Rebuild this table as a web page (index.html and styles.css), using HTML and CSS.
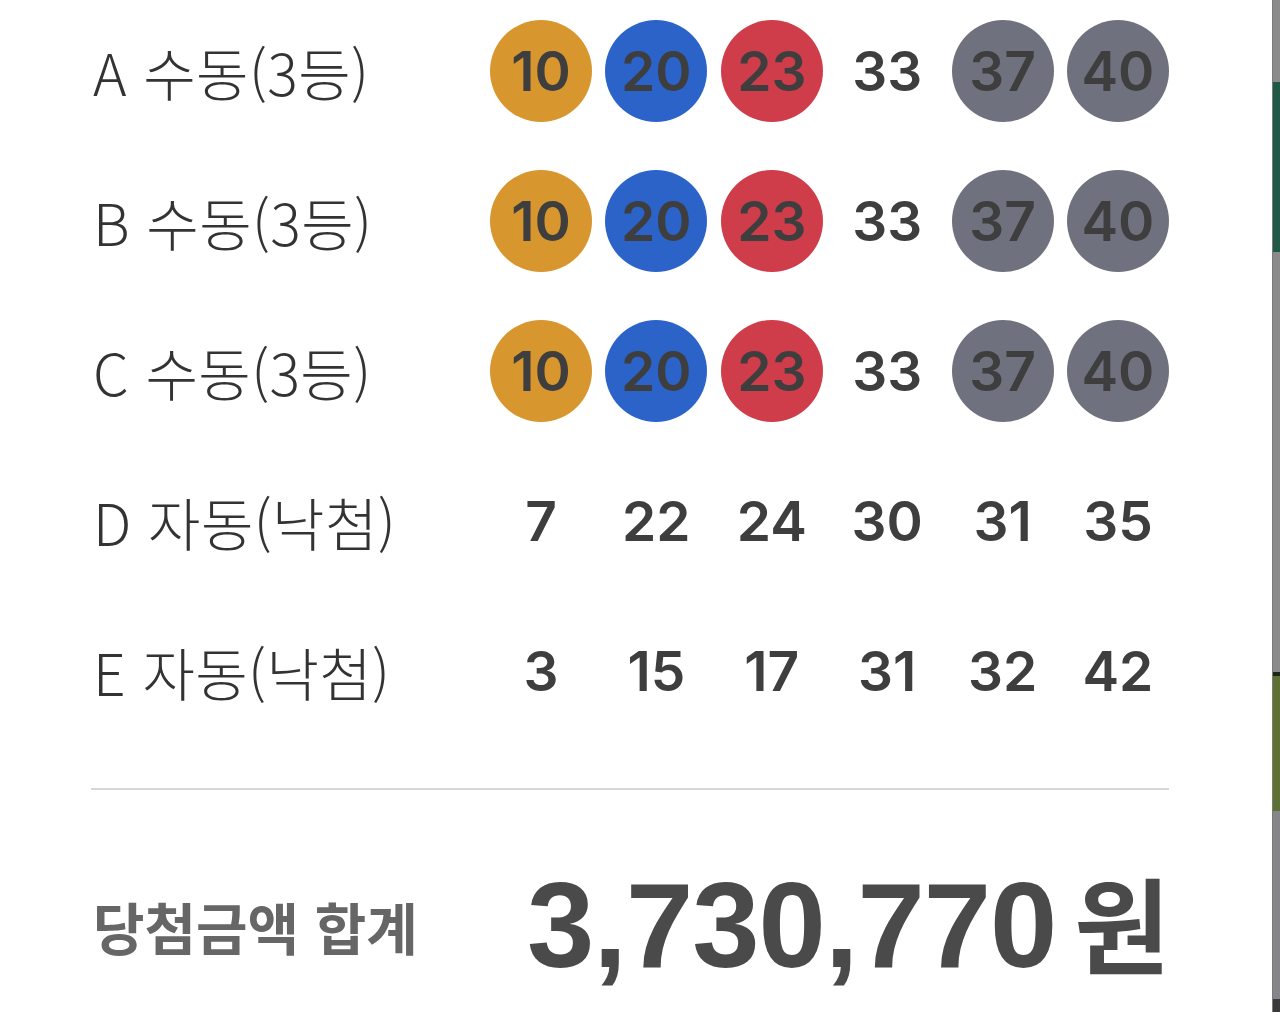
FILE: index.html
```html
<!DOCTYPE html>
<html lang="ko">
<head>
<meta charset="utf-8">
<title>당첨 결과</title>
<link rel="stylesheet" href="styles.css">
</head>
<body>
<div class="screen">
  <main class="sheet">
    <section class="games">
      <div class="game">
        <div class="label">A 수동(3등)</div>
        <span class="ball orange">10</span>
        <span class="ball blue">20</span>
        <span class="ball red">23</span>
        <span class="ball">33</span>
        <span class="ball gray">37</span>
        <span class="ball gray">40</span>
      </div>
      <div class="game">
        <div class="label">B 수동(3등)</div>
        <span class="ball orange">10</span>
        <span class="ball blue">20</span>
        <span class="ball red">23</span>
        <span class="ball">33</span>
        <span class="ball gray">37</span>
        <span class="ball gray">40</span>
      </div>
      <div class="game">
        <div class="label">C 수동(3등)</div>
        <span class="ball orange">10</span>
        <span class="ball blue">20</span>
        <span class="ball red">23</span>
        <span class="ball">33</span>
        <span class="ball gray">37</span>
        <span class="ball gray">40</span>
      </div>
      <div class="game">
        <div class="label">D 자동(낙첨)</div>
        <span class="ball">7</span>
        <span class="ball">22</span>
        <span class="ball">24</span>
        <span class="ball">30</span>
        <span class="ball">31</span>
        <span class="ball">35</span>
      </div>
      <div class="game">
        <div class="label">E 자동(낙첨)</div>
        <span class="ball">3</span>
        <span class="ball">15</span>
        <span class="ball">17</span>
        <span class="ball">31</span>
        <span class="ball">32</span>
        <span class="ball">42</span>
      </div>
    </section>
    <hr class="divider">
    <section class="total">
      <div class="total-label">당첨금액 합계</div>
      <div class="total-amount">3,730,770<span class="won">원</span></div>
    </section>
  </main>
  <aside class="edge">
    <div class="seg s1"></div>
    <div class="seg s2"></div>
    <div class="seg s3"></div>
    <div class="seg s4"></div>
    <div class="seg s5"></div>
    <div class="seg s6"></div>
    <div class="seg s7"></div>
  </aside>
</div>
</body>
</html>
```

FILE: styles.css
```css
html, body {
  margin: 0;
  padding: 0;
  background: #ffffff;
}

.screen {
  display: flex;
  width: 1280px;
  height: 1012px;
  overflow: hidden;
}

.sheet {
  width: 1272px;
  flex: none;
  box-sizing: border-box;
  padding: 20px 0 0 91px;
}

.games {
  display: flex;
  flex-direction: column;
  gap: 48px;
}

.game {
  display: grid;
  grid-template-columns: 385.6px repeat(6, 102px);
  column-gap: 13.4px;
  align-items: center;
  height: 102px;
}

.label {
  padding-left: 2px;
  font-family: "Noto Sans CJK KR", "Noto Sans", sans-serif;
  font-weight: 300;
  font-size: 57px;
  letter-spacing: 0.4px;
  color: #333333;
  white-space: nowrap;
  line-height: 1;
}

.ball {
  width: 102px;
  height: 102px;
  border-radius: 50%;
  display: flex;
  align-items: center;
  justify-content: center;
  font-family: Inter, Roboto, "Liberation Sans", sans-serif;
  font-weight: 600;
  font-size: 55px;
  color: #3e3e3e;
  line-height: 1;
}

.orange { background: #d8962f; }
.blue { background: #2b63c9; }
.red { background: #cf3d4a; }
.gray { background: #6f727e; }

.divider {
  margin: 66px 0 0 0;
  width: 1078px;
  border: 0;
  height: 2px;
  background: #d6d6d6;
}

.total {
  display: flex;
  align-items: center;
  justify-content: space-between;
  width: 1079px;
  height: 150px;
  margin-top: 60px;
}

.total-label {
  padding-left: 2px;
  font-family: "Noto Sans CJK KR", sans-serif;
  font-weight: 700;
  font-size: 56px;
  color: #666666;
  white-space: nowrap;
}

.total-amount {
  font-family: "Liberation Sans", Arial, sans-serif;
  font-weight: 700;
  font-size: 121px;
  letter-spacing: -1px;
  color: #4a4a4a;
  white-space: nowrap;
  line-height: 1;
}

.won {
  font-family: "Noto Sans CJK KR", sans-serif;
  font-weight: 700;
  font-size: 104px;
  letter-spacing: 0;
  margin-left: 18px;
}

.edge {
  flex: 1;
  display: flex;
  flex-direction: column;
  border-left: 1px solid #7a7a7a;
}

.seg { flex: none; }
.s1 { height: 82px; background: #8b8b8b; }
.s2 { height: 170px; background: #1f5a48; }
.s3 { height: 420px; background: #8a8a8a; }
.s4 { height: 4px; background: #1e2418; }
.s5 { height: 135px; background: #5e7034; }
.s6 { height: 188px; background: #86868a; }
.s7 { height: 13px; background: #3a3a3a; }
```
